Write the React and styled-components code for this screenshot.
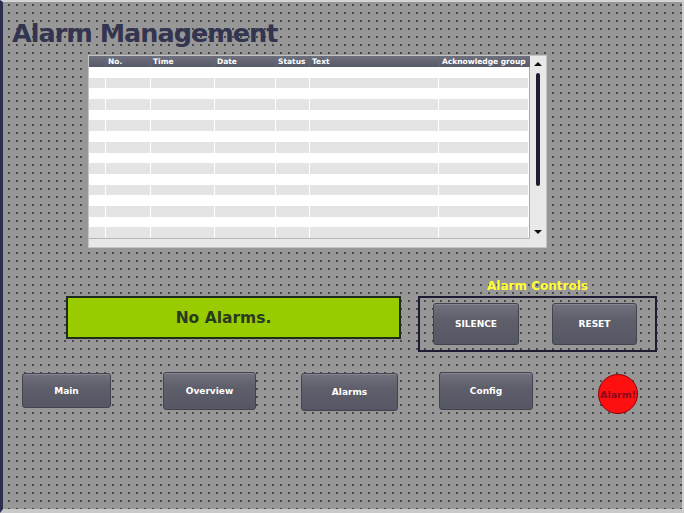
import React from "react";
import styled, { createGlobalStyle } from "styled-components";

const GlobalStyle = createGlobalStyle`
  html, body { margin: 0; padding: 0; background: #969696; }
  body { font-family: "DejaVu Sans", Verdana, sans-serif; }
`;

const Screen = styled.div`
  box-sizing: border-box;
  width: 684px;
  height: 513px;
  overflow: hidden;
  display: flex;
  flex-direction: column;
  border-left: 3px solid #2b2e4c;
  border-top: 2px solid #d4d4d4;
  border-right: 2px solid #cfcfcf;
  border-bottom: 4px solid #c9c9c9;
  background-color: #979797;
  background-image: radial-gradient(circle at 1px 1px, #474747 0.7px, transparent 1px);
  background-size: 8px 8px;
  background-position: 5px 2px;
`;

const Title = styled.h1`
  margin: 16px 0 0 9px;
  font: bold 25.5px/30px "DejaVu Sans", Verdana, sans-serif;
  letter-spacing: -1px;
  color: #323450;
`;

const TableFrame = styled.div`
  margin: 7px 0 0 85px;
  width: 459px;
  height: 193px;
  box-sizing: border-box;
  border: 1px solid #c4c4c4;
  background: #e6e6e6;
  display: grid;
  grid-template-columns: 441px 16px;
`;

const TableMain = styled.div`
  display: flex;
  flex-direction: column;
`;

const HeaderRow = styled.div`
  display: flex;
  height: 11px;
  background: linear-gradient(#6e707e, #575966);
`;

const HeaderCell = styled.div`
  box-sizing: border-box;
  width: ${(p) => p.$w}px;
  padding-left: 2px;
  border-right: 1px solid #666876;
  font: bold 7.5px/11px "DejaVu Sans", Verdana, sans-serif;
  color: #ffffff;
  white-space: nowrap;
  overflow: hidden;
`;

const Body = styled.div`
  height: 172px;
  display: flex;
  flex-direction: column;
  border-right: 1px solid #a9a9a9;
  border-bottom: 1px solid #b4b4b4;
  box-sizing: border-box;
  background: #ffffff;
`;

const Row = styled.div`
  flex: 1;
  display: flex;
  background: ${(p) => (p.$alt ? "#e4e4e4" : "#ffffff")};
`;

const Cell = styled.div`
  box-sizing: border-box;
  width: ${(p) => p.$w}px;
  border-right: 1px solid #ffffff;
`;

const BottomStrip = styled.div`
  flex: 1;
  background: #e8e8e8;
`;

const ScrollBar = styled.div`
  display: flex;
  flex-direction: column;
  align-items: center;
  background: #e9e9e9;
`;

const ArrowUp = styled.div`
  margin-top: 6px;
  width: 0;
  height: 0;
  border-left: 4px solid transparent;
  border-right: 4px solid transparent;
  border-bottom: 4px solid #111111;
`;

const Thumb = styled.div`
  margin-top: 7px;
  width: 4px;
  height: 113px;
  border-radius: 2px;
  background: #1d1f31;
`;

const ArrowDown = styled.div`
  margin-top: 44px;
  width: 0;
  height: 0;
  border-left: 4px solid transparent;
  border-right: 4px solid transparent;
  border-top: 4px solid #111111;
`;

const ControlsGrid = styled.div`
  margin: 31px 0 0 63px;
  display: grid;
  grid-template-columns: 335px 239px;
  grid-template-rows: 15px auto;
  column-gap: 17px;
  row-gap: 2px;
  align-items: start;
`;

const StatusBox = styled.div`
  grid-row: 2;
  grid-column: 1;
  box-sizing: border-box;
  height: 43px;
  border: 2px solid #1e2b1b;
  background: #99cc00;
  display: flex;
  align-items: center;
  justify-content: center;
  padding-right: 20px;
  font: bold 15.5px "DejaVu Sans", Verdana, sans-serif;
  color: #283a22;
`;

const ControlsLabel = styled.div`
  grid-row: 1;
  grid-column: 2;
  text-align: center;
  font: bold 12px/15px "DejaVu Sans", Verdana, sans-serif;
  color: #ffff33;
`;

const ControlsBox = styled.div`
  grid-row: 2;
  grid-column: 2;
  box-sizing: border-box;
  height: 56px;
  border: 2px solid #1c1d33;
  display: flex;
  align-items: flex-start;
  padding: 5px 0 0 13px;
  gap: 33px;
`;

const HmiButton = styled.button`
  box-sizing: border-box;
  width: ${(p) => p.$w}px;
  height: ${(p) => p.$h}px;
  margin: ${(p) => p.$mt || 0}px 0 0 ${(p) => p.$ml || 0}px;
  flex: none;
  border: 1px solid #42434e;
  border-radius: 3px;
  background: linear-gradient(#71727e, #5e5f6b 40%, #565764);
  box-shadow: inset 0 1px 0 rgba(255, 255, 255, 0.15);
  color: #ffffff;
  font: bold 9px "DejaVu Sans", Verdana, sans-serif;
  padding: 0;
`;

const NavRow = styled.div`
  margin-top: 20px;
  padding-left: 19px;
  display: flex;
  align-items: flex-start;
`;

const AlarmLamp = styled.div`
  box-sizing: border-box;
  width: 40px;
  height: 40px;
  margin: 2px 0 0 65px;
  border-radius: 50%;
  border: 1px solid #8e0000;
  background: #ff1010;
  overflow: hidden;
  display: flex;
  align-items: center;
  justify-content: center;
  font: bold 9.5px "DejaVu Sans", Verdana, sans-serif;
  color: #8a0a1e;
  white-space: nowrap;
`;

const columns = [
  { w: 17, label: "" },
  { w: 45, label: "No." },
  { w: 64, label: "Time" },
  { w: 61, label: "Date" },
  { w: 34, label: "Status" },
  { w: 130, label: "Text" },
  { w: 90, label: "Acknowledge group" },
];

const rows = Array.from({ length: 16 }, (_, i) => i);

export default function App() {
  return (
    <>
      <GlobalStyle />
      <Screen>
        <Title>Alarm Management</Title>
        <TableFrame>
          <TableMain>
            <HeaderRow>
              {columns.map((c, i) => (
                <HeaderCell key={i} $w={c.w}>
                  {c.label}
                </HeaderCell>
              ))}
            </HeaderRow>
            <Body>
              {rows.map((r) => (
                <Row key={r} $alt={r % 2 === 1}>
                  {columns.map((c, i) => (
                    <Cell key={i} $w={c.w} />
                  ))}
                </Row>
              ))}
            </Body>
            <BottomStrip />
          </TableMain>
          <ScrollBar>
            <ArrowUp />
            <Thumb />
            <ArrowDown />
          </ScrollBar>
        </TableFrame>
        <ControlsGrid>
          <ControlsLabel>Alarm Controls</ControlsLabel>
          <StatusBox>No Alarms.</StatusBox>
          <ControlsBox>
            <HmiButton $w={86} $h={42}>SILENCE</HmiButton>
            <HmiButton $w={85} $h={42}>RESET</HmiButton>
          </ControlsBox>
        </ControlsGrid>
        <NavRow>
          <HmiButton $w={89} $h={35} $mt={1}>Main</HmiButton>
          <HmiButton $w={93} $h={38} $ml={52}>Overview</HmiButton>
          <HmiButton $w={97} $h={38} $ml={45} $mt={1}>Alarms</HmiButton>
          <HmiButton $w={94} $h={38} $ml={41}>Config</HmiButton>
          <AlarmLamp>Alarm!</AlarmLamp>
        </NavRow>
      </Screen>
    </>
  );
}
